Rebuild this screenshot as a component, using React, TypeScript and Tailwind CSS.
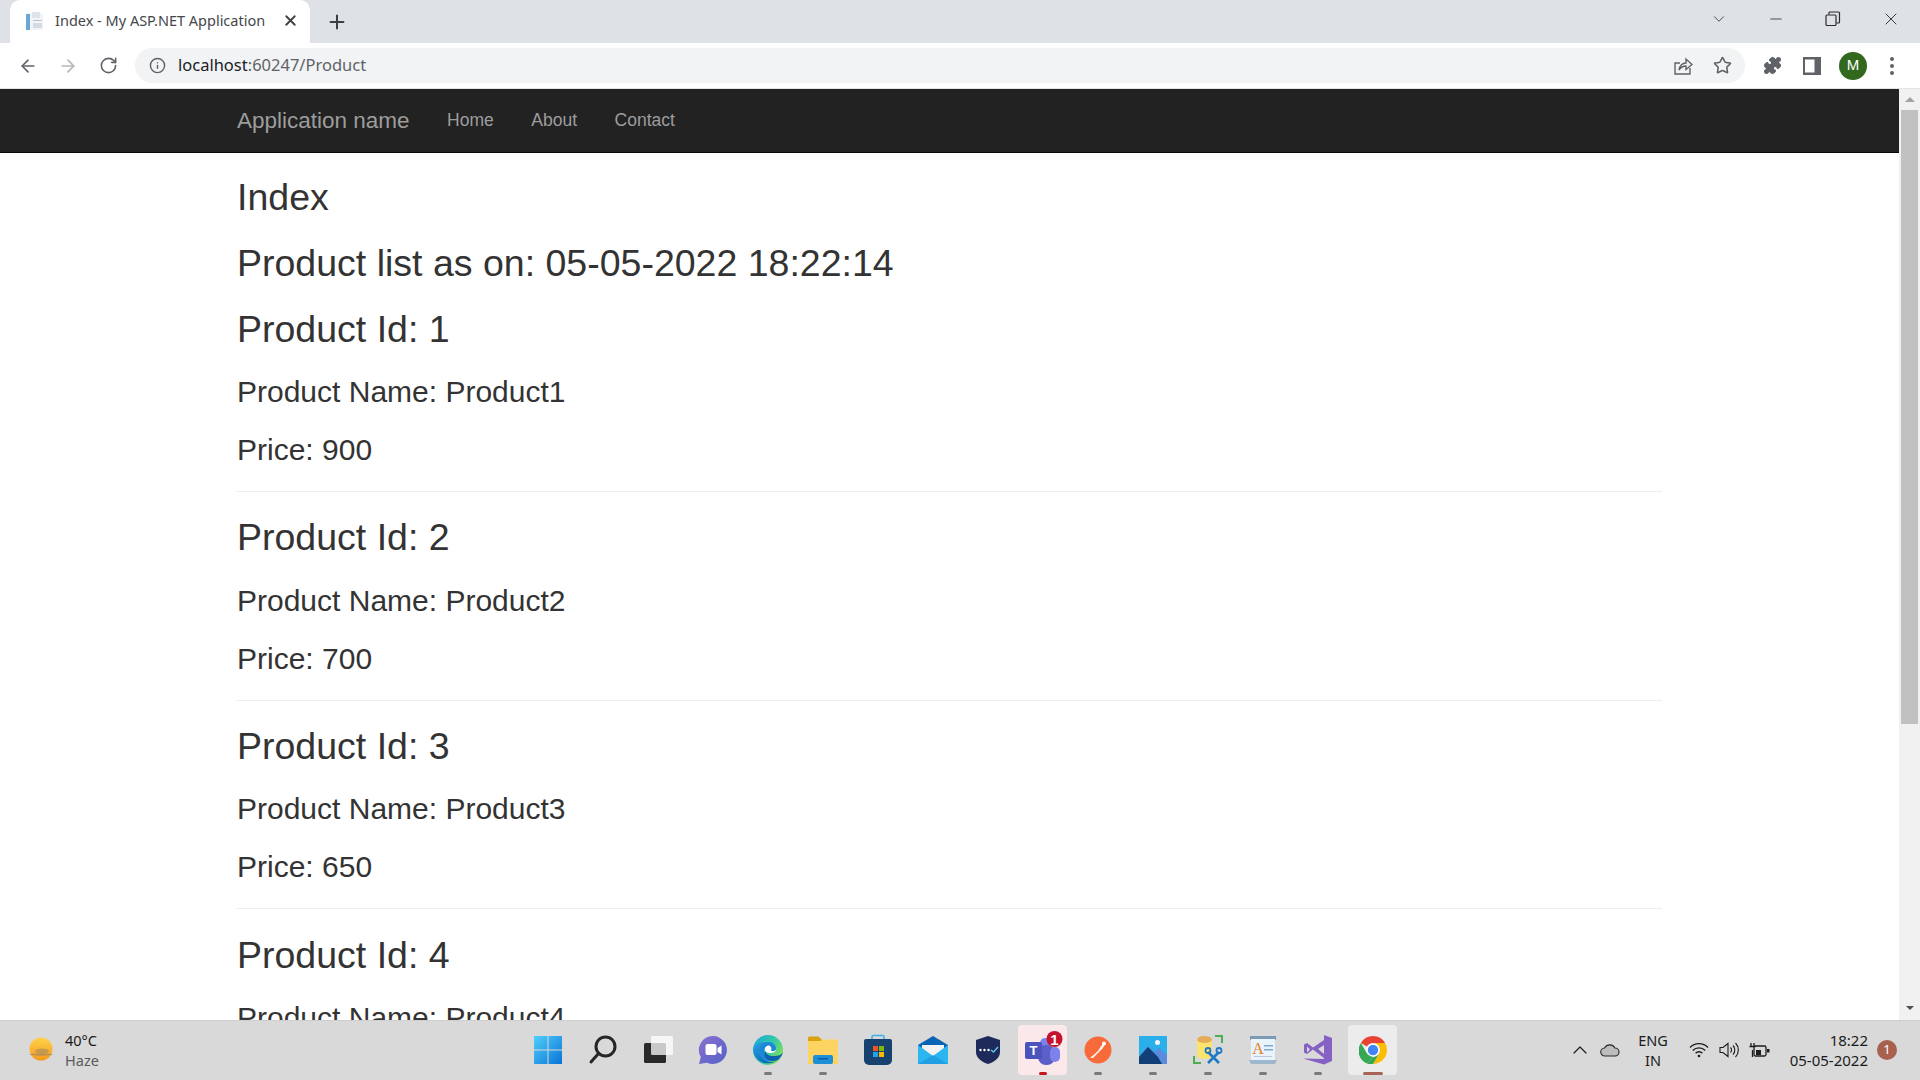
import { ArrowLeft, ArrowRight, RotateCw, Info, X, Plus, Star, Puzzle, ChevronDown, Minus, ChevronUp } from 'lucide-react';

const PRODUCTS = [
    { id: 1, price: 900 },
    { id: 2, price: 700 },
    { id: 3, price: 650 },
    { id: 4, price: 0 },
];

function Favicon() {
    return (
        <svg width="20" height="20" viewBox="0 0 20 20">
            <rect x="1" y="2" width="17" height="17" fill="#f1f4f8" />
            <rect x="1" y="3" width="4" height="16" fill="#6aa6d8" />
            <rect x="7" y="1" width="8" height="6" fill="#dfe4ea" />
            <rect x="8" y="9" width="9" height="1" fill="#b9c2cc" />
            <rect x="8" y="12" width="9" height="5" fill="#d5dbe2" />
        </svg>
    );
}

function Tab() {
    return (
        <div className="relative ml-[10px] flex h-[43px] w-[300px] items-center self-end rounded-t-[10px] bg-white pb-[2px] pl-[15px] pr-[11px]">
            <Favicon />
            <span className="ml-[10px] flex-1 whitespace-nowrap font-['Noto_Sans',sans-serif] text-[14.5px] text-[#45474a]">
                Index - My ASP.NET Application
            </span>
            <X className="h-[17px] w-[17px] text-[#3c4043]" strokeWidth={2.6} />
        </div>
    );
}

function WindowControls() {
    return (
        <div className="ml-auto flex items-center pb-[6px] text-[#3b3d40]">
            <ChevronDown className="mr-[39px] h-[18px] w-[18px]" strokeWidth={1.2} />
            <Minus className="mr-[40px] h-[18px] w-[18px]" strokeWidth={1.2} />
            <svg className="mr-[40px]" width="16" height="16" viewBox="0 0 16 16" fill="none" stroke="#2b2b2b" strokeWidth="1.2">
                <rect x="1" y="4" width="10" height="10.5" rx="1" />
                <path d="M4 3.500V2a1 1 0 0 1 1-1h8.500a1 1 0 0 1 1 1v9a1 1 0 0 1-1 1H11.500" />
            </svg>
            <X className="mr-[19px] h-[20px] w-[20px]" strokeWidth={1.2} />
        </div>
    );
}

function Toolbar() {
    return (
        <div className="flex h-[46px] items-center border-b border-[#e3e4e6] bg-white">
            <ArrowLeft className="ml-[18px] h-[20px] w-[20px] text-[#5f6368]" strokeWidth={2} />
            <ArrowRight className="ml-[20px] h-[20px] w-[20px] text-[#b4b6b9]" strokeWidth={2} />
            <RotateCw className="ml-[21px] h-[19px] w-[19px] text-[#5f6368]" strokeWidth={2} />
            <div className="ml-[17px] flex h-[35px] flex-1 items-center rounded-full bg-[#f1f3f4] pl-[14px] pr-[13px]">
                <Info className="h-[17px] w-[17px] text-[#5f6368]" strokeWidth={2} />
                <span className="ml-[12px] font-['Noto_Sans',sans-serif] text-[16.5px] text-[#5f6368]">
                    <span className="text-[#202124]">localhost</span>:60247/Product
                </span>
                <svg className="ml-auto mr-[20px]" width="20" height="20" viewBox="0 0 20 20" fill="none" stroke="#5f6368" strokeWidth="1.4">
                    <path d="M17 12v6H2V7h5" />
                    <path d="M6 14c1-5 4-7 7-7V3l6 5.500-6 5V10c-3 0-5 1-7 4z" />
                </svg>
                <Star className="h-[19px] w-[19px] text-[#5f6368]" strokeWidth={2} />
            </div>
            <Puzzle className="ml-[18px] h-[19px] w-[19px] fill-[#5f6368] text-[#5f6368]" strokeWidth={1.5} />
            <svg className="ml-[21px]" width="18" height="18" viewBox="0 0 18 18">
                <path fillRule="evenodd" d="M0 0h18v18H0zM2 2.500v13h9.500v-13z" fill="#5f6368" />
            </svg>
            <div className="ml-[18px] flex h-[28px] w-[28px] items-center justify-center rounded-full bg-[#33691e] font-['Liberation_Sans',sans-serif] text-[15px] text-white">
                M
            </div>
            <div className="ml-[23px] mr-[26px] flex flex-col gap-[3px]">
                <div className="h-[4px] w-[4px] rounded-full bg-[#5f6368]" />
                <div className="h-[4px] w-[4px] rounded-full bg-[#5f6368]" />
                <div className="h-[4px] w-[4px] rounded-full bg-[#5f6368]" />
            </div>
        </div>
    );
}

function Navbar() {
    return (
        <nav className="flex h-[64px] shrink-0 items-center border-b border-[#080808] bg-[#222222] pl-[237px] text-[#9d9d9d]">
            <span className="text-[22.5px]">Application name</span>
            <span className="ml-[37.500px] text-[17.5px]">Home</span>
            <span className="ml-[37.500px] text-[17.5px]">About</span>
            <span className="ml-[37.500px] text-[17.5px]">Contact</span>
        </nav>
    );
}

function ProductBlock({ id, price, last }: { id: number; price: number; last: boolean }) {
    return (
        <div>
            <h2 className="mt-[25px] text-[37.5px] leading-[41.25px] font-normal">Product Id: {id}</h2>
            <p className="mt-[25px] text-[30px] leading-[33px]">Product Name: Product{id}</p>
            {!last && <p className="mt-[25px] text-[30px] leading-[33px]">Price: {price}</p>}
            {!last && <hr className="mt-[25px] mb-[25.500px] border-[#eeeeee]" />}
        </div>
    );
}

function Scrollbar() {
    return (
        <div className="flex w-[21px] shrink-0 flex-col items-center bg-[#f1f1f1] pt-[8px] pb-[10px]">
            <div className="h-0 w-0 border-x-[5px] border-b-[5px] border-x-transparent border-b-[#a3a3a3]" />
            <div className="mt-[8px] h-[614px] w-[17px] bg-[#c1c1c1]" />
            <div className="mt-auto h-0 w-0 border-x-[4px] border-t-[4px] border-x-transparent border-t-[#505050]" />
        </div>
    );
}

function StartIcon() {
    return (
        <svg width="30" height="30" viewBox="0 0 30 30">
            <defs>
                <linearGradient id="win" x1="0" y1="0" x2="1" y2="1">
                    <stop offset="0" stopColor="#4fd0fb" />
                    <stop offset="1" stopColor="#0a72d6" />
                </linearGradient>
            </defs>
            <path d="M1 1h13.500v13.500H1zM15.500 1H29v13.500H15.500zM1 15.500h13.500V29H1zM15.500 15.500H29V29H15.500z" fill="url(#win)" />
        </svg>
    );
}

function SearchIcon() {
    return (
        <svg width="30" height="30" viewBox="0 0 30 30" fill="none" stroke="#262626" strokeWidth="3" strokeLinecap="round">
            <circle cx="17.500" cy="11.500" r="9.500" />
            <path d="M10.500 18.500 3 27" />
        </svg>
    );
}

function TaskViewIcon() {
    return (
        <svg width="30" height="30" viewBox="0 0 30 30">
            <rect x="1" y="8" width="22" height="20" rx="1.500" fill="#2a2a2a" />
            <rect x="8" y="1" width="22" height="19" rx="1.500" fill="#ffffff" fillOpacity="0.75" />
        </svg>
    );
}

function ChatIcon() {
    return (
        <svg width="30" height="30" viewBox="0 0 30 30">
            <defs>
                <linearGradient id="chat" x1="0" y1="0" x2="1" y2="1">
                    <stop offset="0" stopColor="#8a6fd0" />
                    <stop offset="1" stopColor="#5562c8" />
                </linearGradient>
            </defs>
            <path d="M15 1a14 14 0 1 1-6 26.700L1 29l1.800-7A14 14 0 0 1 15 1z" fill="url(#chat)" />
            <rect x="7.500" y="9" width="11" height="11" rx="2" fill="#fff" />
            <path d="m19.500 13 4-2.500v9l-4-2.500z" fill="#fff" />
        </svg>
    );
}

function EdgeIcon() {
    return (
        <svg width="32" height="32" viewBox="0 0 32 32">
            <defs>
                <linearGradient id="edge1" x1="0" y1="0" x2="1" y2="0.600">
                    <stop offset="0" stopColor="#18a6d8" />
                    <stop offset="0.600" stopColor="#35c9a8" />
                    <stop offset="1" stopColor="#7ce05a" />
                </linearGradient>
                <linearGradient id="edge2" x1="0" y1="0" x2="0.600" y2="1">
                    <stop offset="0" stopColor="#2aa5e6" />
                    <stop offset="1" stopColor="#0c64b8" />
                </linearGradient>
            </defs>
            <circle cx="16" cy="16" r="15" fill="url(#edge1)" />
            <path d="M1 16C2 9 9 7 14 9c-6 0-8 5-6 11 2 6 9 10 16 7a15 15 0 0 1-23-11z" fill="url(#edge2)" />
            <path d="M8 20c-3-7 2-12 8-12 5 0 8 3 8 7 0 2-2 3-5 3 1-3-1-6-4-5-3 1-4 6-1 9 3 3 7 3 12 2-4 4-15 6-18-4z" fill="#1c86d8" />
            <path d="M31 17c0 4-3 7-5 9-5 2-9 1-12-2-2-2-2-5-1-7 1 3 4 5 8 5 5 0 10-1 10-5z" fill="#0f5fae" />
            <path d="M13 14c1-2 3-3 5-2 1 1 2 2 1 5 2 0 4 0 5-1 0 2-3 3-6 3-4 0-6-3-5-5z" fill="#fff" />
        </svg>
    );
}

function FolderIcon() {
    return (
        <svg width="32" height="30" viewBox="0 0 32 30">
            <path d="M1 3a1.500 1.500 0 0 1 1.500-1.500h9L15 5h16v4H1z" fill="#dca10f" />
            <path d="M1 6h12l3-1.500h15V29H1z" fill="#fdd461" />
            <rect x="6" y="20" width="20" height="9" rx="2" fill="#1d8ed8" />
            <rect x="11" y="23" width="10" height="1.500" fill="#0b5e9e" />
        </svg>
    );
}

function StoreIcon() {
    return (
        <svg width="30" height="32" viewBox="0 0 30 32">
            <path d="M9 6V3a1.500 1.500 0 0 1 1.500-1.500h9A1.500 1.500 0 0 1 21 3v3" fill="none" stroke="#3fb0ea" strokeWidth="1.600" />
            <path d="M1 7a2 2 0 0 1 2-2h24a2 2 0 0 1 2 2v19a5 5 0 0 1-5 5H6a5 5 0 0 1-5-5z" fill="#17416f" />
            <rect x="10" y="12" width="5" height="5" fill="#f0532a" />
            <rect x="16" y="12" width="5" height="5" fill="#7fba00" />
            <rect x="10" y="18" width="5" height="5" fill="#1fa5f0" />
            <rect x="16" y="18" width="5" height="5" fill="#fdb900" />
        </svg>
    );
}

function MailIcon() {
    return (
        <svg width="32" height="30" viewBox="0 0 32 30">
            <path d="M1 10 16 1l15 9v3H1z" fill="#0b63b5" />
            <path d="M5 10h22v6l-11 6-11-6z" fill="#f2f2f2" />
            <path d="M1 10l15 11 15-11v19H1z" fill="#2bb6f0" />
            <path d="M31 29H1l15-9z" fill="#1a8fdb" fillOpacity="0.6" />
        </svg>
    );
}

function ShieldIcon() {
    return (
        <svg width="26" height="30" viewBox="0 0 26 30">
            <path d="M13 1l12 4v12c0 6-6 10-12 12C7 27 1 23 1 17V5z" fill="#1d2a5a" />
            <circle cx="5.500" cy="15" r="1.200" fill="#fff" />
            <circle cx="9.500" cy="15" r="1.200" fill="#fff" />
            <circle cx="13.500" cy="15" r="1.200" fill="#fff" />
            <path d="M16 15l2.500 2 4.500-5" fill="none" stroke="#5cc6ea" strokeWidth="1.500" />
        </svg>
    );
}

function TeamsIcon() {
    return (
        <svg width="40" height="40" viewBox="0 0 40 40">
            <circle cx="22" cy="13" r="5" fill="#7b83eb" />
            <rect x="15" y="15" width="17" height="20" rx="8" fill="#5b5fc7" />
            <rect x="27" y="17" width="10" height="15" rx="5" fill="#7b83eb" />
            <circle cx="32" cy="13" r="3.500" fill="#7b83eb" />
            <rect x="2" y="12" width="17" height="17" rx="2" fill="#4b53bc" />
            <text x="10.500" y="25" textAnchor="middle" fontSize="13" fontWeight="700" fill="#fff" fontFamily="'Liberation Sans', sans-serif">T</text>
            <circle cx="31.500" cy="9" r="8" fill="#c4122f" />
            <text x="31.500" y="14.500" textAnchor="middle" fontSize="15" fontWeight="700" fill="#fff" fontFamily="'Liberation Sans', sans-serif">1</text>
        </svg>
    );
}

function PostmanIcon() {
    return (
        <svg width="28" height="28" viewBox="0 0 28 28">
            <circle cx="14" cy="14" r="13.500" fill="#f76b3a" />
            <path d="M6 22l8-7 3-5 3-3 1 1-2 4-6 6-4 4z" fill="#fff" fillOpacity="0.9" />
            <circle cx="20" cy="7.500" r="2" fill="#fff" />
        </svg>
    );
}

function PhotosIcon() {
    return (
        <svg width="28" height="28" viewBox="0 0 28 28">
            <rect width="28" height="28" fill="#29b0ea" />
            <circle cx="18.500" cy="6.500" r="2.500" fill="#f4f8fc" />
            <path d="M0 20 9 10l6 6 5-4 8 7v9H0z" fill="#5b8bdc" />
            <path d="M0 21 9 11l10 10 4 7H0z" fill="#123f78" />
        </svg>
    );
}

function SsmsIcon() {
    return (
        <svg width="30" height="30" viewBox="0 0 30 30">
            <path d="M1 21v7h7M22 1h7v7" fill="none" stroke="#4cae4f" strokeWidth="2" />
            <path d="M4 4h15v17c0 1-3 3-7 3s-8-2-8-3z" fill="#fbe36f" />
            <ellipse cx="11.500" cy="4.500" rx="7.500" ry="3.500" fill="#e5ac5a" />
            <path d="M15 28l11-11M26 28 15 17" stroke="#1f78c8" strokeWidth="2.600" />
            <circle cx="26" cy="15.500" r="2.500" fill="none" stroke="#1f78c8" strokeWidth="1.800" />
            <circle cx="15" cy="15.500" r="2.500" fill="none" stroke="#1f78c8" strokeWidth="1.800" />
        </svg>
    );
}

function NotesIcon() {
    return (
        <svg width="28" height="30" viewBox="0 0 28 30">
            <rect x="1" y="1" width="26" height="4" fill="#7d9ab5" />
            <rect x="2" y="4" width="24" height="21" fill="#e9f3fb" />
            <path d="M0 25h28l-2 4H2z" fill="#9db8cd" />
            <text x="9" y="19" textAnchor="middle" fontSize="16" fill="#e67e22" fontFamily="'Liberation Serif', serif">A</text>
            <rect x="15" y="10" width="9" height="1.500" fill="#7fa8d0" />
            <rect x="15" y="14" width="9" height="1.500" fill="#7fa8d0" />
            <rect x="5" y="21" width="18" height="1" fill="#b9cbdb" />
        </svg>
    );
}

function VsIcon() {
    return (
        <svg width="30" height="31" viewBox="0 0 30 31">
            <path d="M21 1l8 3v23l-8 3.500L0 24.500l21 .500z" fill="#8661c5" />
            <path fillRule="evenodd" d="M21 6v18L10 15.500 4 20l-3-1.500v-8L4 9l6 4.500zM21 11l-6 4 6 5zM4 12.500v6L7 15.500z" fill="#8661c5" />
        </svg>
    );
}

function ChromeIcon() {
    return (
        <svg width="28" height="28" viewBox="0 0 28 28">
            <path d="M14 0a14 14 0 0 1 12.120 7H14a7 7 0 0 0-6.060 3.500L1.880 7A14 14 0 0 1 14 0z" fill="#ea4335" />
            <path d="M1.880 7l6.060 10.500A7 7 0 0 0 14 21l-6.060 6.620A14 14 0 0 1 1.880 7z" fill="#34a853" />
            <path d="M26.120 7A14 14 0 0 1 14 28l6.060-10.500A7 7 0 0 0 20.060 10.500 7 7 0 0 0 14 7z" fill="#fbbc04" />
            <path d="M7.940 17.500A7 7 0 0 0 20.060 17.500L14 28a14 14 0 0 1-6.060-.380L14 21z" fill="#34a853" />
            <circle cx="14" cy="14" r="6.500" fill="#fff" />
            <circle cx="14" cy="14" r="5.200" fill="#4285f4" />
        </svg>
    );
}

const DOCK = [
    { key: 'start', icon: <StartIcon />, pill: '' },
    { key: 'search', icon: <SearchIcon />, pill: '' },
    { key: 'tasks', icon: <TaskViewIcon />, pill: '' },
    { key: 'chat', icon: <ChatIcon />, pill: '' },
    { key: 'edge', icon: <EdgeIcon />, pill: 'w-[8px] bg-[#7a7a7a]' },
    { key: 'folder', icon: <FolderIcon />, pill: 'w-[8px] bg-[#7a7a7a]' },
    { key: 'store', icon: <StoreIcon />, pill: '' },
    { key: 'mail', icon: <MailIcon />, pill: '' },
    { key: 'shield', icon: <ShieldIcon />, pill: '' },
    { key: 'teams', icon: <TeamsIcon />, pill: 'w-[8px] bg-[#c4161c]', bg: 'bg-[#fbe8ea]' },
    { key: 'postman', icon: <PostmanIcon />, pill: 'w-[8px] bg-[#7a7a7a]' },
    { key: 'photos', icon: <PhotosIcon />, pill: 'w-[8px] bg-[#7a7a7a]' },
    { key: 'ssms', icon: <SsmsIcon />, pill: 'w-[8px] bg-[#7a7a7a]' },
    { key: 'notes', icon: <NotesIcon />, pill: 'w-[8px] bg-[#7a7a7a]' },
    { key: 'vs', icon: <VsIcon />, pill: 'w-[8px] bg-[#7a7a7a]' },
    { key: 'chrome', icon: <ChromeIcon />, pill: 'w-[20px] bg-[#a86455]', bg: 'bg-[#ececec]' },
];

function Taskbar() {
    return (
        <footer className="flex h-[60px] shrink-0 items-center border-t border-[#cfcfcf] bg-[#d9d9d9] pb-[2px] font-['Noto_Sans',sans-serif]">
            <div className="flex w-[520px] shrink-0 items-center pl-[28px]">
                <svg width="26" height="26" viewBox="0 0 26 26">
                    <defs>
                        <linearGradient id="sun" x1="0" y1="0" x2="0" y2="1">
                            <stop offset="0" stopColor="#ffd24d" />
                            <stop offset="1" stopColor="#f59a1c" />
                        </linearGradient>
                    </defs>
                    <circle cx="13" cy="12" r="11.500" fill="url(#sun)" />
                    <ellipse cx="14" cy="14" rx="7" ry="2.500" fill="#a08a66" fillOpacity="0.6" />
                    <ellipse cx="13" cy="17.500" rx="12" ry="1.200" fill="#8f8472" fillOpacity="0.6" />
                </svg>
                <div className="ml-[11px] flex flex-col text-[14.5px] leading-[20px]">
                    <span className="text-[#1a1a1a]">40°C</span>
                    <span className="text-[#5a5a5a]">Haze</span>
                </div>
            </div>
            <div className="flex">
                {DOCK.map((item) => (
                    <div key={item.key} className="relative flex h-[50px] w-[55px] items-center justify-center">
                        {item.bg && <div className={`absolute inset-y-0 left-[3px] right-[3px] rounded-[4px] ${item.bg}`} />}
                        <div className="relative">{item.icon}</div>
                        {item.pill && <div className={`absolute bottom-[0px] h-[3px] rounded-full ${item.pill}`} />}
                    </div>
                ))}
            </div>
            <div className="ml-[168px] flex items-center text-[#1c1c1c]">
                <ChevronUp className="h-[24px] w-[24px]" strokeWidth={1.2} />
                <svg className="ml-[8px]" width="20" height="14" viewBox="0 0 20 14">
                    <path d="M5 13a4 4 0 0 1-.500-8A6 6 0 0 1 15 5a4 4 0 0 1 0 8z" fill="#bdbdbd" stroke="#2b2b2b" strokeWidth="1.100" />
                </svg>
                <div className="ml-[18px] flex w-[30px] flex-col items-center text-[14.5px] leading-[20px]">
                    <span>ENG</span>
                    <span>IN</span>
                </div>
                <svg className="ml-[21px]" width="20" height="16" viewBox="0 0 20 16" fill="none" stroke="#1c1c1c" strokeWidth="1.300">
                    <path d="M1 5.500a12.500 12.500 0 0 1 18 0M3.800 8.500a8.500 8.500 0 0 1 12.400 0M6.600 11.300a4.500 4.500 0 0 1 6.800 0" />
                    <circle cx="10" cy="14" r="1.300" fill="#1c1c1c" stroke="none" />
                </svg>
                <svg className="ml-[10px]" width="20" height="16" viewBox="0 0 20 16" fill="none" stroke="#1c1c1c" strokeWidth="1.100">
                    <path d="M1 5.500h3L9 1.500v13L4 10.500H1z" />
                    <path d="M11.500 5.500a3.500 3.500 0 0 1 0 5M14 3.500a6.500 6.500 0 0 1 0 9M16.500 1a10 10 0 0 1 0 14" />
                </svg>
                <svg className="ml-[10px]" width="21" height="16" viewBox="0 0 21 16" fill="none" stroke="#1c1c1c" strokeWidth="1.300">
                    <path d="M2 1v3M5 1v3M0.500 4.500h6M3.500 8v7" />
                    <rect x="5" y="4" width="12" height="10" rx="1.500" />
                    <rect x="7" y="8" width="5" height="5" fill="#1c1c1c" stroke="none" />
                    <rect x="18" y="7" width="2.500" height="3.500" fill="#1c1c1c" stroke="none" />
                </svg>
                <div className="ml-[19px] flex w-[79px] flex-col items-end text-[15px] leading-[20px]">
                    <span>18:22</span>
                    <span className="whitespace-nowrap">05-05-2022</span>
                </div>
                <div className="ml-[9px] flex h-[20px] w-[20px] items-center justify-center rounded-full bg-[#a8604f] text-[13px] text-white">
                    1
                </div>
            </div>
        </footer>
    );
}

export default function App() {
    return (
        <div className="flex h-screen w-full flex-col overflow-hidden bg-white font-['Liberation_Sans',sans-serif]">
            <header className="shrink-0">
                <div className="flex h-[43px] items-center bg-[#dee1e6]">
                    <Tab />
                    <Plus className="ml-[16px] h-[22px] w-[22px] text-[#3c4043]" strokeWidth={2.2} />
                    <WindowControls />
                </div>
                <Toolbar />
            </header>
            <div className="flex min-h-0 flex-1">
                <div className="flex min-w-0 flex-1 flex-col">
                    <Navbar />
                    <main className="min-h-0 flex-1 overflow-hidden px-[237px] text-[#333333]">
                        <h2 className="mt-[24px] text-[37.5px] leading-[41.25px] font-normal">Index</h2>
                        <h2 className="mt-[25px] text-[37.5px] leading-[41.25px] font-normal">Product list as on: 05-05-2022 18:22:14</h2>
                        <div className="-mt-[1px]">
                            {PRODUCTS.map((p, i) => (
                                <ProductBlock key={p.id} id={p.id} price={p.price} last={i === PRODUCTS.length - 1} />
                            ))}
                        </div>
                    </main>
                </div>
                <Scrollbar />
            </div>
            <Taskbar />
        </div>
    );
}
